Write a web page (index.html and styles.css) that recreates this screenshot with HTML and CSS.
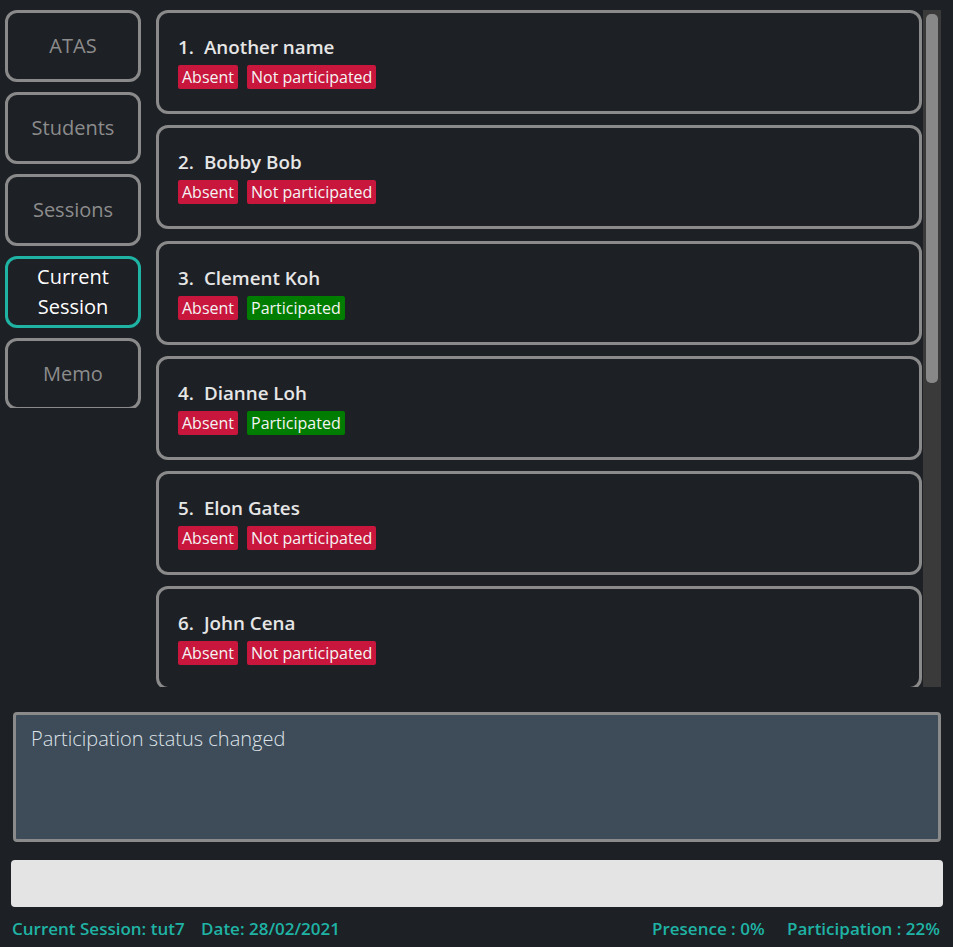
FILE: index.html
```html
<!DOCTYPE html>
<html lang="en">
<head>
  <meta charset="UTF-8" />
  <meta name="viewport" content="width=device-width, initial-scale=1.0"/>
  <title>ATAS</title>
  <link rel="stylesheet" href="styles.css">
</head>
<body>
  <div class="main">
    <nav class="sidebar">
      <div class="nav-btn">ATAS</div>
      <div class="nav-btn">Students</div>
      <div class="nav-btn">Sessions</div>
      <div class="nav-btn active">Current<br>Session</div>
      <div class="nav-btn">Memo</div>
    </nav>

    <div class="list">
      <div class="card">
        <div class="name"><span class="idx">1.</span>Another name</div>
        <div class="tags"><span class="tag red">Absent</span><span class="tag red">Not participated</span></div>
      </div>
      <div class="card">
        <div class="name"><span class="idx">2.</span>Bobby Bob</div>
        <div class="tags"><span class="tag red">Absent</span><span class="tag red">Not participated</span></div>
      </div>
      <div class="card">
        <div class="name"><span class="idx">3.</span>Clement Koh</div>
        <div class="tags"><span class="tag red">Absent</span><span class="tag green">Participated</span></div>
      </div>
      <div class="card">
        <div class="name"><span class="idx">4.</span>Dianne Loh</div>
        <div class="tags"><span class="tag red">Absent</span><span class="tag green">Participated</span></div>
      </div>
      <div class="card">
        <div class="name"><span class="idx">5.</span>Elon Gates</div>
        <div class="tags"><span class="tag red">Absent</span><span class="tag red">Not participated</span></div>
      </div>
      <div class="card">
        <div class="name"><span class="idx">6.</span>John Cena</div>
        <div class="tags"><span class="tag red">Absent</span><span class="tag red">Not participated</span></div>
      </div>
    </div>

    <div class="scrollbar">
      <div class="thumb"></div>
    </div>
  </div>

  <div class="result">Participation status changed</div>

  <div class="command"></div>

  <footer class="status">
    <div class="status-left">
      <span>Current Session: tut7</span>
      <span>Date: 28/02/2021</span>
    </div>
    <div class="status-right">
      <span>Presence : 0%</span>
      <span>Participation : 22%</span>
    </div>
  </footer>
</body>
</html>
```

FILE: styles.css
```css
:root {
  --bg: #1d2025;
  --border: #8a8a8a;
  --teal: #1fb3a4;
  --red: #c8163c;
  --green: #007d00;
  --text: #e6e6e6;
}

* {
  box-sizing: border-box;
  margin: 0;
  padding: 0;
}

body {
  font-family: "Open Sans", "Noto Sans", sans-serif;
  background-color: var(--bg);
  color: var(--text);
  width: 953px;
  height: 947px;
  overflow: hidden;
}

.main {
  display: flex;
  height: 687px;
}

.sidebar {
  width: 141px;
  height: 408px;
  padding: 10px 0 0 5px;
  display: flex;
  flex-direction: column;
  gap: 10px;
  overflow: hidden;
  flex-shrink: 0;
}

.nav-btn {
  flex-shrink: 0;
  height: 72px;
  border: 3px solid var(--border);
  border-radius: 12px;
  display: flex;
  align-items: center;
  justify-content: center;
  text-align: center;
  font-size: 20px;
  font-weight: 500;
  line-height: 30px;
  color: #8c8c8c;
}

.nav-btn.active {
  border-color: var(--teal);
  color: #ffffff;
}

.list {
  margin: 10px 1px 0 15px;
  width: 766px;
  overflow: hidden;
  display: flex;
  flex-direction: column;
  gap: 11.3px;
}

.scrollbar {
  margin-top: 10px;
  width: 18px;
  height: 677px;
  background-color: #3a3a3a;
  padding: 4px 3px;
}

.thumb {
  height: 369px;
  background-color: #888888;
  border-radius: 5px;
}

.card {
  flex-shrink: 0;
  height: 104px;
  border: 3px solid var(--border);
  border-radius: 12px;
  padding: 0 19px;
  display: flex;
  flex-direction: column;
  justify-content: center;
  gap: 6px;
}

.name {
  font-size: 18.8px;
  font-weight: 600;
  line-height: 24px;
  color: var(--text);
}

.idx {
  margin-right: 10px;
}

.tags {
  display: flex;
  gap: 9px;
}

.tag {
  height: 24px;
  line-height: 24px;
  padding: 0 4px;
  font-size: 16px;
  color: #f4f4f4;
  border-radius: 2px;
}

.tag.red {
  background-color: var(--red);
}

.tag.green {
  background-color: var(--green);
}

.result {
  margin: 25px 12px 0 13px;
  height: 130px;
  background-color: #3e4b59;
  border: 3px solid var(--border);
  border-radius: 4px;
  padding: 10px 15px;
  font-size: 20px;
  font-weight: 300;
  line-height: 28px;
  color: #dde3e8;
}

.command {
  margin: 18px 10px 0 11px;
  height: 47px;
  background-color: #e4e4e4;
  border-radius: 4px;
}

.status {
  display: flex;
  justify-content: space-between;
  padding: 10px 13px 0 12px;
  font-size: 17px;
  font-weight: 600;
  color: var(--teal);
}

.status-left span {
  margin-right: 12px;
}

.status-right span {
  margin-right: 18px;
}

.status-left span:last-child,
.status-right span:last-child {
  margin-right: 0;
}
```
